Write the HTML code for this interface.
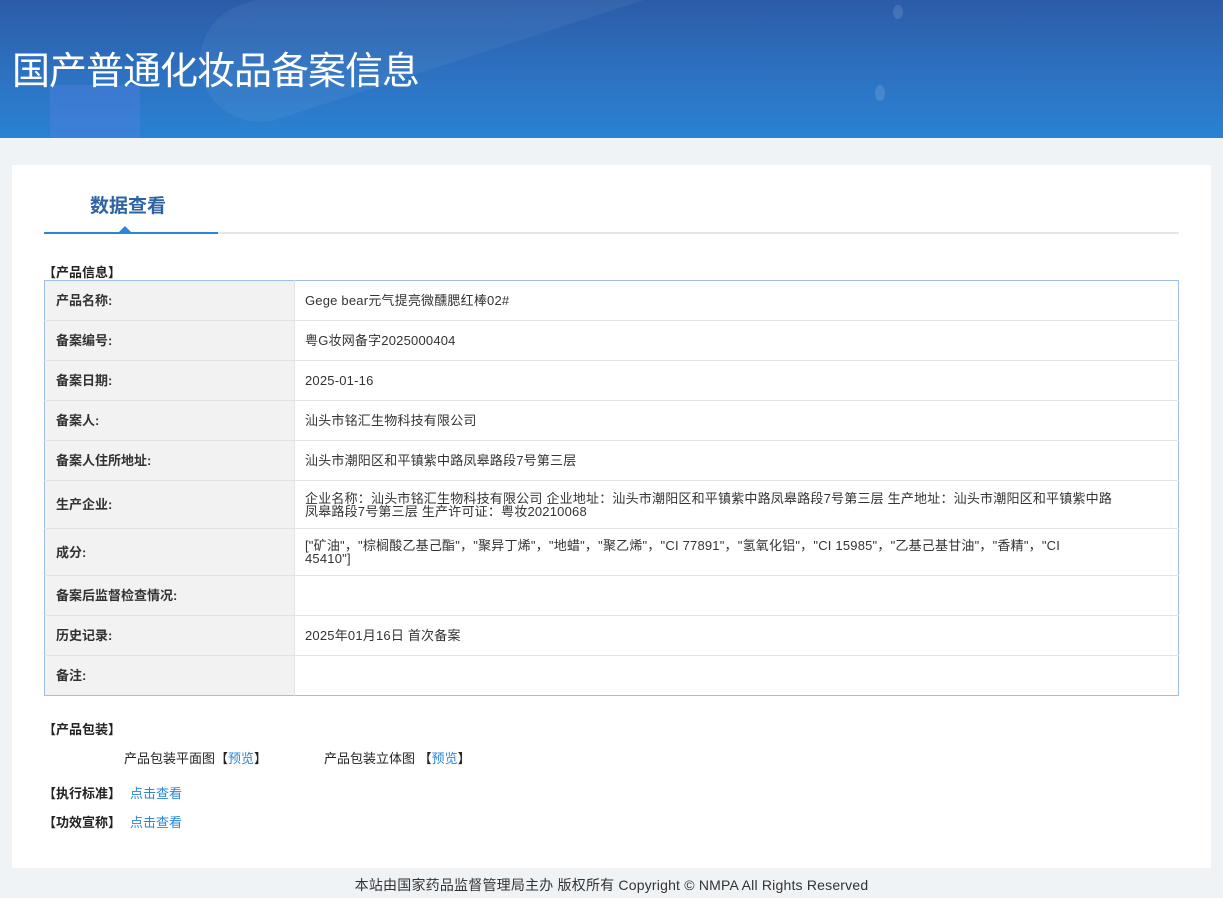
<!DOCTYPE html>
<html><head><meta charset="utf-8"><style>
*{margin:0;padding:0;box-sizing:border-box}
body{width:1223px;height:898px;background:#eff3f6;font-family:"Liberation Sans","Noto Sans CJK SC",sans-serif;color:#333;overflow:hidden;position:relative}
.hd{position:absolute;left:0;top:0;width:1223px;height:138px;background:linear-gradient(180deg,#2b5ca8 0%,#2d74c4 60%,#2a82d2 100%);overflow:hidden}
.hd h1{position:absolute;left:12px;top:40px;font-size:38px;font-weight:normal;color:#fff;letter-spacing:-1px}
.card{position:absolute;left:12px;top:165px;width:1199px;height:703px;background:#fff}
.tab{position:absolute;left:78px;top:26px;font-size:19px;font-weight:bold;color:#2d62a3}
.line{position:absolute;left:32px;top:67px;width:1135px;height:2px;background:#e4e6e8}
.line b{position:absolute;left:0;top:0;width:174px;height:2px;background:#2a86d8}
.tri{position:absolute;left:107px;top:61px;width:0;height:0;border-left:6px solid transparent;border-right:6px solid transparent;border-bottom:6px solid #2a86d8}
.sec{position:absolute;font-size:13px;font-weight:bold;color:#222}
table{position:absolute;left:32px;top:115px;width:1135px;border-collapse:collapse;border:1px solid #9cc0ea;font-size:13px}
td{border-bottom:1px solid #e3e3e3;vertical-align:middle;line-height:13px}
td.l{width:250px;background:#f2f2f2;font-weight:bold;padding-left:11px;border-right:1px solid #e3e3e3;color:#333}
td.v{padding-left:10px;color:#333;padding-right:20px;letter-spacing:0.2px}
a{color:#2a86d8;text-decoration:none}
.t{position:absolute;font-size:13px;color:#222}
.ft{position:absolute;top:875px;left:0;width:1223px;text-align:center;font-size:14px;color:#333;letter-spacing:0.2px}
</style></head><body>
<div class="hd">
<div style="position:absolute;left:190px;top:-60px;width:520px;height:120px;border-radius:60px;background:rgba(255,255,255,.05);transform:rotate(-18deg)"></div>
<div style="position:absolute;left:50px;top:85px;width:90px;height:60px;background:rgba(90,130,230,.35)"></div>
<div style="position:absolute;left:875px;top:85px;width:10px;height:16px;border-radius:50%;background:rgba(255,255,255,.12)"></div>
<div style="position:absolute;left:893px;top:5px;width:10px;height:14px;border-radius:50%;background:rgba(255,255,255,.12)"></div>
<h1>国产普通化妆品备案信息</h1></div>
<div class="card">
<div class="tab">数据查看</div>
<div class="line"><b></b></div><div class="tri"></div>
<div class="sec" style="left:31px;top:97px">【产品信息】</div>
<table>
<tr style="height:40px"><td class="l">产品名称:</td><td class="v">Gege bear元气提亮微醺腮红棒02#</td></tr>
<tr style="height:40px"><td class="l">备案编号:</td><td class="v">粤G妆网备字2025000404</td></tr>
<tr style="height:40px"><td class="l">备案日期:</td><td class="v">2025-01-16</td></tr>
<tr style="height:40px"><td class="l">备案人:</td><td class="v">汕头市铭汇生物科技有限公司</td></tr>
<tr style="height:40px"><td class="l">备案人住所地址:</td><td class="v">汕头市潮阳区和平镇紫中路凤皋路段7号第三层</td></tr>
<tr style="height:48px"><td class="l">生产企业:</td><td class="v">企业名称：汕头市铭汇生物科技有限公司 企业地址：汕头市潮阳区和平镇紫中路凤皋路段7号第三层 生产地址：汕头市潮阳区和平镇紫中路<br>凤皋路段7号第三层 生产许可证：粤妆20210068</td></tr>
<tr style="height:47px"><td class="l">成分:</td><td class="v">["矿油"，"棕榈酸乙基己酯"，"聚异丁烯"，"地蜡"，"聚乙烯"，"CI 77891"，"氢氧化铝"，"CI 15985"，"乙基己基甘油"，"香精"，"CI<br>45410"]</td></tr>
<tr style="height:40px"><td class="l">备案后监督检查情况:</td><td class="v"></td></tr>
<tr style="height:40px"><td class="l">历史记录:</td><td class="v">2025年01月16日 首次备案</td></tr>
<tr style="height:40px"><td class="l" style="border-bottom:none">备注:</td><td class="v" style="border-bottom:none"></td></tr>
</table>
<div class="sec" style="left:31px;top:554px">【产品包装】</div>
<div class="t" style="left:112px;top:583px">产品包装平面图【<a>预览</a>】</div>
<div class="t" style="left:312px;top:583px">产品包装立体图 【<a>预览</a>】</div>
<div class="sec" style="left:31px;top:618px">【执行标准】<a style="font-weight:normal;margin-left:9px">点击查看</a></div>
<div class="sec" style="left:31px;top:647px">【功效宣称】<a style="font-weight:normal;margin-left:9px">点击查看</a></div>
</div>
<div class="ft">本站由国家药品监督管理局主办 版权所有 Copyright © NMPA All Rights Reserved</div>
</body></html>
